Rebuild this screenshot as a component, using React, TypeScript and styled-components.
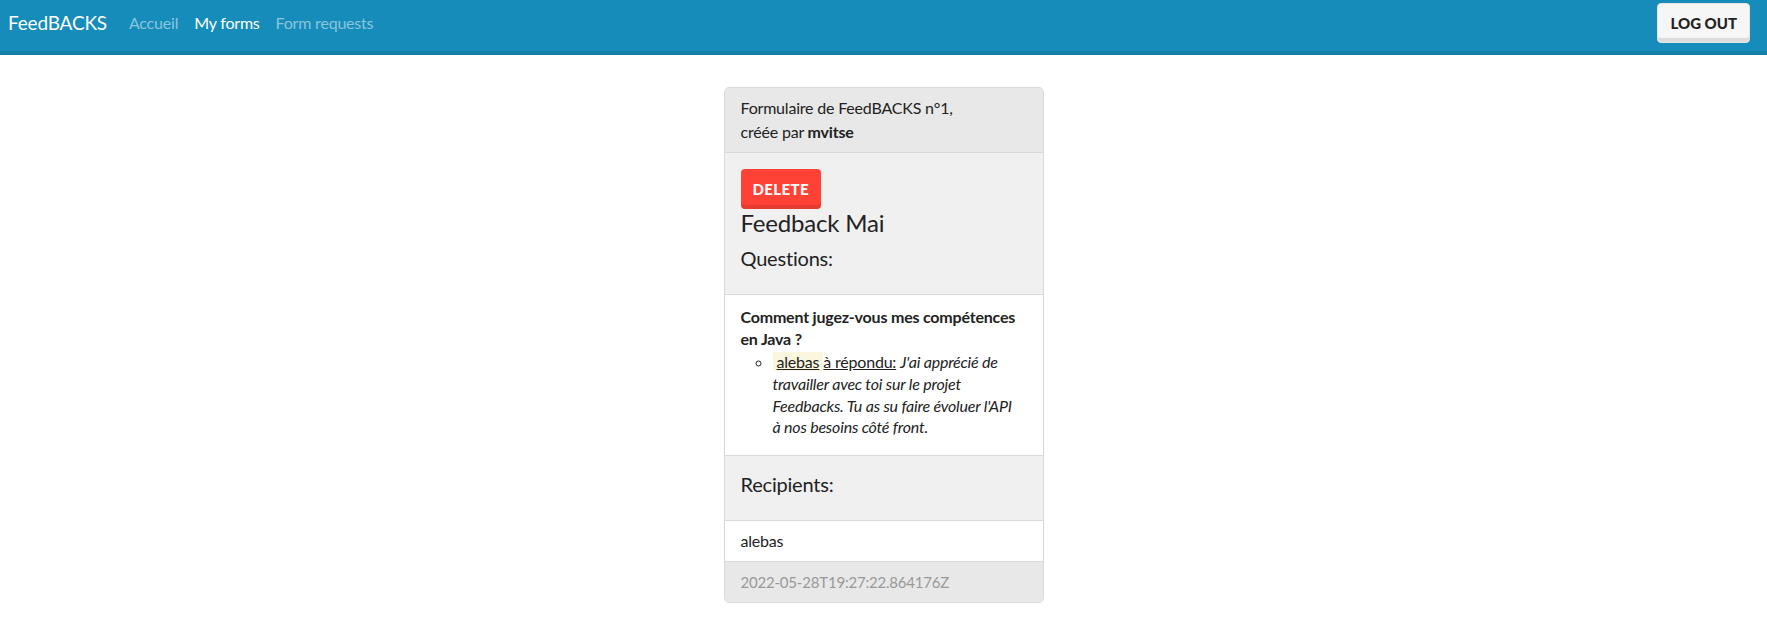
import styled, { createGlobalStyle } from 'styled-components';

const GlobalStyle = createGlobalStyle`
  body {
    margin: 0;
    background: #fff;
    color: #222;
    font-family: Lato, "Liberation Sans", sans-serif;
    font-size: 16px;
    line-height: 1.5;
    letter-spacing: -0.2px;
  }
  * {
    box-sizing: border-box;
  }
`;

function App() {
  return (
    <>
      <GlobalStyle />
      <Navbar>
        <Brand>FeedBACKS</Brand>
        <NavLink>Accueil</NavLink>
        <NavLink active>My forms</NavLink>
        <NavLink>Form requests</NavLink>
        <Spacer />
        <LogoutButton>Log out</LogoutButton>
      </Navbar>
      <Main>
        <Card>
          <CardHeader>
            Formulaire de FeedBACKS n°1,
            <br />
            créée par <b>mvitse</b>
          </CardHeader>
          <CardBody>
            <DeleteButton>Delete</DeleteButton>
            <CardTitle>Feedback Mai</CardTitle>
            <SectionTitle>Questions:</SectionTitle>
          </CardBody>
          <ListGroup>
            <QuestionItem>
              <b>Comment jugez-vous mes compétences en Java ?</b>
              <Answers>
                <li>
                  <Mark>
                    <u>alebas</u>
                  </Mark>
                  <u>à répondu:</u>{' '}
                  <i>J'ai apprécié de travailler avec toi sur le projet Feedbacks. Tu as su faire évoluer l'API à{'\u00a0'}nos besoins côté front.</i>
                </li>
              </Answers>
            </QuestionItem>
          </ListGroup>
          <CardBody>
            <SectionTitle>Recipients:</SectionTitle>
          </CardBody>
          <ListGroup>
            <ListItem>alebas</ListItem>
          </ListGroup>
          <CardFooter>2022-05-28T19:27:22.864176Z</CardFooter>
        </Card>
      </Main>
    </>
  );
}

const Navbar = styled.nav`
  display: flex;
  align-items: center;
  height: 55px;
  padding: 0 17px 5px 8px;
  background: #158cba;
  border-bottom: 4px solid #137ea8;
`;

const Brand = styled.a`
  font-size: 19px;
  color: #fff;
  margin-right: 14px;
  cursor: pointer;
`;

const NavLink = styled.a<{ active?: boolean }>`
  padding: 0 8px;
  font-size: 16px;
  color: ${(props) => (props.active ? '#fff' : 'rgba(255, 255, 255, 0.5)')};
  cursor: pointer;
`;

const Spacer = styled.div`
  flex: 1;
`;

const LogoutButton = styled.button`
  height: 40px;
  padding: 0 12px;
  border: 1px solid #e4e4e4;
  border-radius: 4px;
  background: #f6f6f6;
  box-shadow: inset 0 -4px 0 rgba(0, 0, 0, 0.1);
  color: #222;
  font-family: inherit;
  font-size: 15px;
  font-weight: 900;
  text-transform: uppercase;
`;

const Main = styled.main`
  display: flex;
  justify-content: center;
  padding-top: 32px;
`;

const Card = styled.div`
  width: 320px;
  border: 1px solid #d9d9d9;
  border-radius: 5px;
  background: #f0f0f0;
  overflow: hidden;
`;

const CardHeader = styled.div`
  padding: 8px 16px;
  background: #e8e8e8;
  border-bottom: 1px solid #d9d9d9;
`;

const CardBody = styled.div`
  padding: 16px;
`;

const DeleteButton = styled.button`
  display: block;
  height: 40px;
  padding: 0 12px;
  border: none;
  border-radius: 4px;
  background: #ff4136;
  box-shadow: inset 0 -4px 0 rgba(0, 0, 0, 0.1);
  color: #fff;
  font-family: inherit;
  font-size: 15px;
  font-weight: 900;
  letter-spacing: 0.4px;
  text-transform: uppercase;
`;

const CardTitle = styled.h4`
  margin: 0 0 8px;
  font-size: 24px;
  font-weight: 400;
  line-height: 1.2;
`;

const SectionTitle = styled.h5`
  margin: 0 0 8px;
  font-size: 20px;
  font-weight: 400;
  line-height: 1.2;
`;

const ListGroup = styled.div`
  border-top: 1px solid #d9d9d9;
  border-bottom: 1px solid #d9d9d9;
  background: #fff;
`;

const ListItem = styled.div`
  padding: 8px 16px;
`;

const QuestionItem = styled(ListItem)`
  padding: 11px 16px 17px;
  line-height: 21.7px;
`;

const Answers = styled.ul`
  margin: 2px 0 0;
  padding-left: 32px;
  list-style-type: circle;
`;

const Mark = styled.mark`
  padding: 0 4px;
  background: #fbf6de;
  color: inherit;
`;

const CardFooter = styled.div`
  padding: 8px 16px;
  background: #e8e8e8;
  color: #999;
  font-size: 15px;
  line-height: 24px;
`;

export default App;
